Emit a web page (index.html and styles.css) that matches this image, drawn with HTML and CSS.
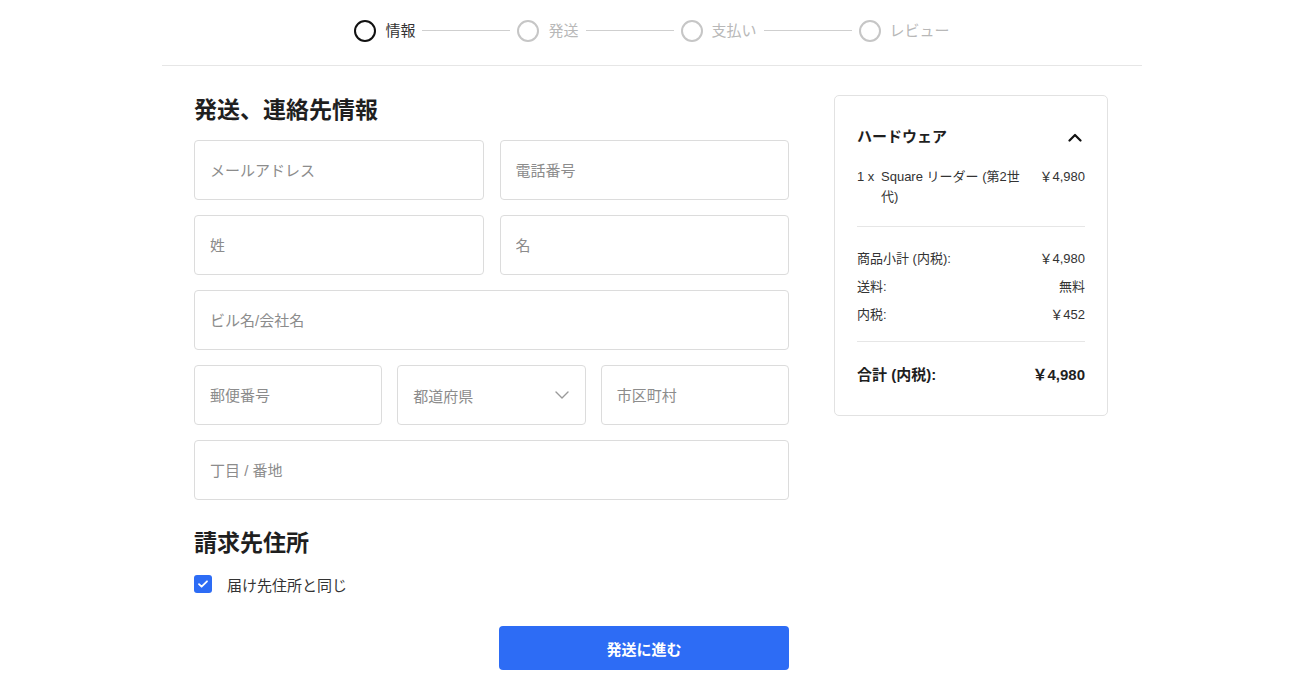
FILE: index.html
```html
<!DOCTYPE html>
<html lang="ja">
<head>
<meta charset="utf-8">
<title>Checkout</title>
<link rel="stylesheet" href="styles.css">
</head>
<body>
<header class="stepper-bar">
  <ol class="stepper">
    <li class="step active"><span class="dot"></span><span class="label">情報</span></li>
    <li class="sep"></li>
    <li class="step"><span class="dot"></span><span class="label">発送</span></li>
    <li class="sep"></li>
    <li class="step"><span class="dot"></span><span class="label">支払い</span></li>
    <li class="sep"></li>
    <li class="step"><span class="dot"></span><span class="label">レビュー</span></li>
  </ol>
</header>
<main class="layout">
  <section class="form-col">
    <h2 class="section-title">発送、連絡先情報</h2>
    <div class="fields">
      <div class="row two">
        <input class="field" type="text" placeholder="メールアドレス">
        <input class="field" type="text" placeholder="電話番号">
      </div>
      <div class="row two">
        <input class="field" type="text" placeholder="姓">
        <input class="field" type="text" placeholder="名">
      </div>
      <div class="row one">
        <input class="field" type="text" placeholder="ビル名/会社名">
      </div>
      <div class="row three">
        <input class="field" type="text" placeholder="郵便番号">
        <div class="field select">
          <span>都道府県</span>
          <svg class="chev" width="14" height="8" viewBox="0 0 14 8"><path d="M1 1l6 6 6-6" fill="none" stroke="#9a9a9a" stroke-width="1.4" stroke-linecap="round" stroke-linejoin="round"/></svg>
        </div>
        <input class="field" type="text" placeholder="市区町村">
      </div>
      <div class="row one">
        <input class="field" type="text" placeholder="丁目 / 番地">
      </div>
    </div>
    <h2 class="section-title billing">請求先住所</h2>
    <label class="check-row">
      <span class="checkbox"><svg width="12" height="10" viewBox="0 0 12 10"><path d="M2 5.2l2.6 2.5L10 2.3" fill="none" stroke="#fff" stroke-width="1.8" stroke-linecap="round" stroke-linejoin="round"/></svg></span>
      <span class="check-label">届け先住所と同じ</span>
    </label>
    <div class="actions">
      <button class="primary" type="button">発送に進む</button>
    </div>
  </section>
  <aside class="summary">
    <div class="summary-head">
      <h3 class="summary-title">ハードウェア</h3>
      <svg width="14" height="9" viewBox="0 0 14 9"><path d="M1.5 7.5L7 2l5.5 5.5" fill="none" stroke="#111" stroke-width="2.2" stroke-linecap="round" stroke-linejoin="round"/></svg>
    </div>
    <div class="item">
      <span class="qty">1 x</span>
      <span class="name">Square リーダー (第2世代)</span>
      <span class="price">￥4,980</span>
    </div>
    <hr class="divider">
    <div class="lines">
      <div class="line"><span>商品小計 (内税):</span><span>￥4,980</span></div>
      <div class="line"><span>送料:</span><span>無料</span></div>
      <div class="line"><span>内税:</span><span>￥452</span></div>
    </div>
    <hr class="divider">
    <div class="total"><span>合計 (内税):</span><span>￥4,980</span></div>
  </aside>
</main>
</body>
</html>
```
FILE: styles.css
```css
* { box-sizing: border-box; }
html, body { margin: 0; padding: 0; background: #fff; }
body {
  font-family: "Liberation Sans", "Noto Sans CJK JP", sans-serif;
  color: #222;
}

.stepper-bar {
  width: 980px;
  margin-left: calc(50% - 488px);
  height: 66px;
  border-bottom: 1px solid #e6e6e6;
  display: flex;
  align-items: center;
  justify-content: center;
  padding-bottom: 4px;
}
.stepper {
  list-style: none;
  margin: 0;
  padding: 0;
  display: flex;
  align-items: center;
}
.step { display: flex; align-items: center; gap: 9px; }
.dot {
  width: 22px; height: 22px;
  border-radius: 50%;
  border: 2px solid #c6c6c6;
}
.label { font-size: 15px; line-height: 20px; color: #b8b8b8; }
.step.active .dot { border-color: #111; }
.step.active .label { color: #333; }
.sep {
  width: 88px; height: 1px;
  background: #cfcfcf;
  margin: 0 7px 0 7px;
}

.layout {
  width: 916px;
  padding-left: 2px;
  margin: 29px auto 0;
  display: flex;
  align-items: flex-start;
  gap: 45px;
}
.form-col { width: 595px; flex: none; display: flex; flex-direction: column; }
.section-title {
  margin: 0;
  font-size: 23px;
  line-height: 30px;
  font-weight: 700;
  color: #1f1f1f;
}
.fields { margin-top: 15px; display: flex; flex-direction: column; gap: 15px; }
.row { display: grid; gap: 15px; }
.row.two { grid-template-columns: 1fr 1fr; gap: 16px; }
.row.one { grid-template-columns: 1fr; }
.row.three { grid-template-columns: 1fr 1fr 1fr; }
.field {
  height: 60px;
  width: 100%;
  border: 1px solid #dcdcdc;
  border-radius: 4px;
  padding: 0 15px;
  font-family: inherit;
  font-size: 15px;
  color: #222;
  background: #fff;
  outline: none;
}
.field::placeholder { color: #8c8c8c; }
.select {
  display: flex;
  align-items: center;
  justify-content: space-between;
  color: #8c8c8c;
}
.select .chev { margin-right: 1px; }

.billing { margin-top: 28px; }
.check-row {
  margin-top: 16px;
  display: flex;
  align-items: center;
  gap: 15px;
  height: 20px;
}
.checkbox {
  width: 18px; height: 18px;
  border-radius: 3px;
  background: #2d6cf5;
  display: flex; align-items: center; justify-content: center;
}
.check-label { font-size: 15px; color: #333; }
.actions { margin-top: 32px; display: flex; justify-content: flex-end; }
.primary {
  width: 290px; height: 44px;
  border: none;
  border-radius: 4px;
  background: #2d6cf5;
  color: #fff;
  font-family: inherit;
  font-size: 15px;
  font-weight: 700;
}

.summary {
  width: 274px;
  flex: none;
  border: 1px solid #e2e2e2;
  border-radius: 5px;
  padding: 31px 22px 30px 22px;
}
.summary-head { display: flex; justify-content: space-between; align-items: center; height: 20px; }
.summary-title { margin: 0; font-size: 15px; font-weight: 700; line-height: 20px; color: #1f1f1f; }
.summary-head svg { margin-right: 3px; }
.item {
  margin-top: 20px;
  display: flex;
  align-items: flex-start;
  font-size: 13px;
  line-height: 20px;
  color: #333;
}
.qty { width: 24px; flex: none; }
.name { flex: 1; padding-right: 18px; }
.price { flex: none; }
.divider { border: none; border-top: 1px solid #e6e6e6; margin: 19px 0 0; }
.lines { margin-top: 22px; display: flex; flex-direction: column; gap: 8px; margin-bottom: 16px; }
.line { display: flex; justify-content: space-between; font-size: 13px; line-height: 20px; color: #333; }
.total {
  margin-top: 23px;
  display: flex;
  justify-content: space-between;
  font-size: 15px;
  font-weight: 700;
  line-height: 20px;
  color: #1f1f1f;
}
.lines + .divider { margin-top: 0; }
```
